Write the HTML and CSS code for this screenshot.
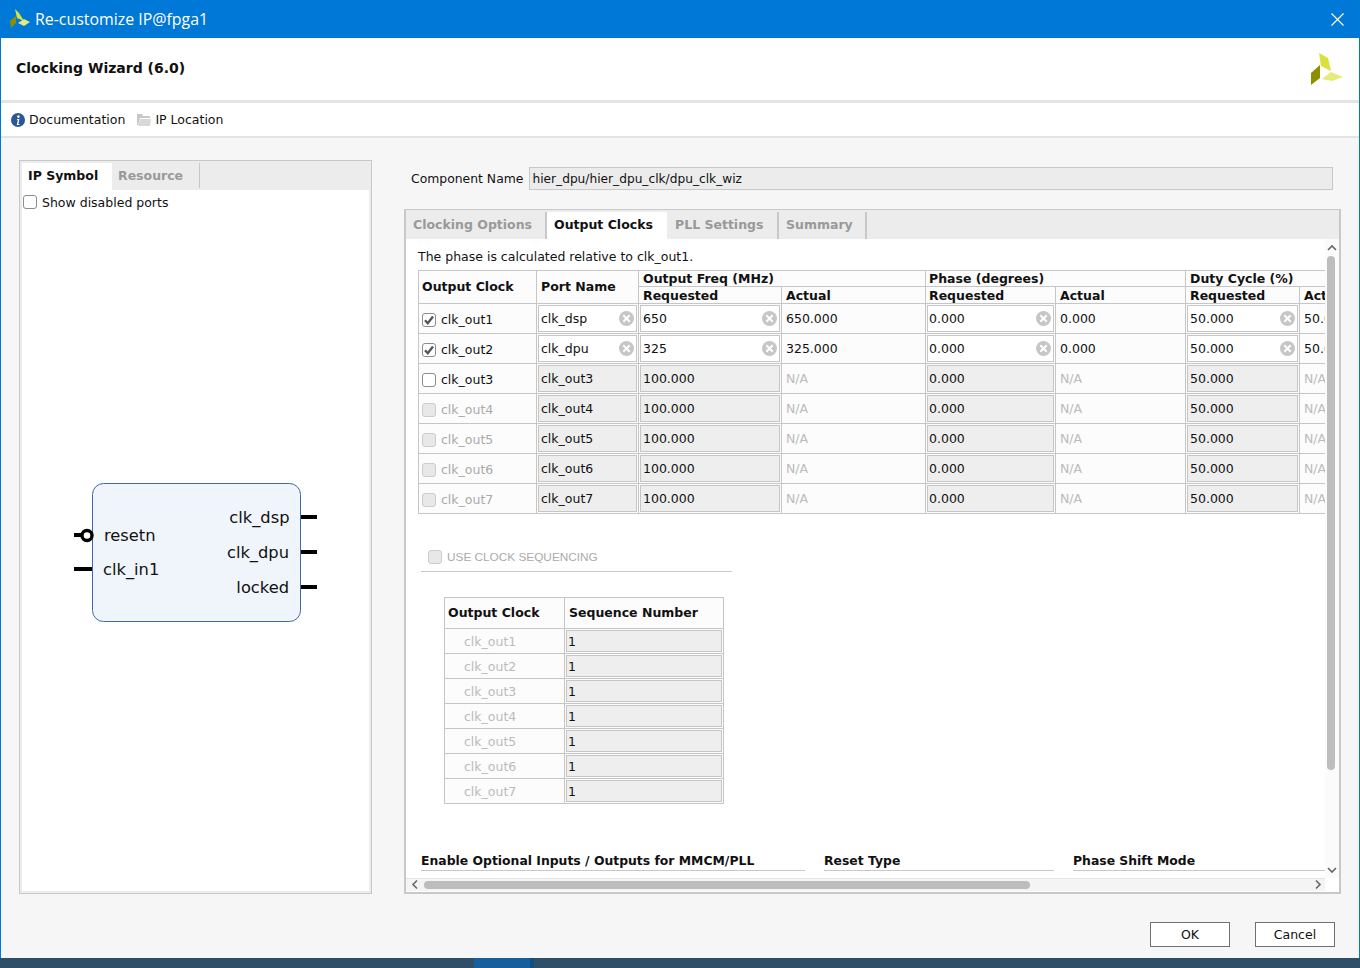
FILE: index.html
```html
<!DOCTYPE html>
<html lang="en">
<head>
<meta charset="utf-8">
<title>Re-customize IP@fpga1</title>
<link rel="stylesheet" href="styles.css">
</head>
<body>
<svg class="defs" width="0" height="0" aria-hidden="true">
  <symbol id="clear" viewBox="0 0 15 15">
    <circle cx="7.5" cy="7.5" r="7.5" fill="#c6c6c6"/>
    <path d="M4.3 4.3l6.4 6.4M10.7 4.3l-6.4 6.4" stroke="#fff" stroke-width="2" fill="none"/>
  </symbol>
  <symbol id="tick" viewBox="0 0 14 14">
    <path d="M3 7.2l2.8 3L11 3.6" stroke="#555" stroke-width="2.4" fill="none"/>
  </symbol>
</svg>
<div class="window">
  <div class="titlebar">
    <svg class="tlogo" width="22" height="20" viewBox="0 0 22 20">
      <polygon points="6,0 10,4 15,12 8,9" fill="#dbe03c"/>
      <polygon points="1,12 7,7 7,14 2,19" fill="#8d8f00"/>
      <polygon points="9,14 15,10 21,13 15,17" fill="#e5ea7c"/>
    </svg>
    <span class="ttext">Re-customize IP@fpga1</span>
    <svg class="tclose" width="13" height="13" viewBox="0 0 13 13"><path d="M.5.5l12 12M12.5.5l-12 12" stroke="#fff" stroke-width="1.1" fill="none"/></svg>
  </div>
  <div class="header">
    <span class="htitle">Clocking Wizard (6.0)</span>
    <svg width="33" height="33" viewBox="0 0 33 33">
      <polygon points="8,0 17,5 20,18 10,13" fill="#dbe03c"/>
      <polygon points="0,20 9,12 9,25 0,32" fill="#8d8f00"/>
      <polygon points="11,26 20,19 32,24 21,28" fill="#e5ea7c"/>
    </svg>
  </div>
  <div class="toolbar">
    <span class="tool">
      <svg width="14" height="14" viewBox="0 0 14 14"><circle cx="7" cy="7" r="7" fill="#2b5797"/><circle cx="7.4" cy="3.6" r="1.3" fill="#fff"/><path d="M6.2 6h2.2l-1 5h1v1H5.8l1-5h-.8z" fill="#fff"/></svg>
      Documentation
    </span>
    <span class="tool">
      <svg width="14" height="13" viewBox="0 0 14 13"><path d="M0 1h5l1 2h7v2H3L1 12H0z" fill="#c8c8c8"/><path d="M3 6h11l-1 7H1z" fill="#d8d8d8"/></svg>
      IP Location
    </span>
  </div>
  <div class="main">
    <section class="leftpanel">
      <div class="tabs">
        <span class="tab active ipsym">IP Symbol</span>
        <span class="tab resource">Resource</span>
      </div>
      <div class="leftbody">
        <label class="showports"><span class="check"></span>Show disabled ports</label>
        <svg class="symbol" width="347" height="676" viewBox="22 214 347 676">
          <rect x="92.5" y="483.5" width="208" height="138" rx="11" fill="#f0f5fb" stroke="#3f6aa8"/>
          <g stroke="#000" stroke-width="4" fill="none">
            <path d="M74 535h9M74 569h18M301 517h16M301 552h16M301 587h16"/>
            <circle cx="87" cy="535.5" r="5" stroke-width="3.4" fill="#fff"/>
          </g>
          <g class="symtext">
            <text x="104" y="541">resetn</text>
            <text x="103" y="575">clk_in1</text>
            <text x="289.5" y="523" text-anchor="end">clk_dsp</text>
            <text x="289" y="558" text-anchor="end">clk_dpu</text>
            <text x="289" y="593" text-anchor="end">locked</text>
          </g>
        </svg>
      </div>
    </section>
    <section class="rightpanel">
      <div class="compname">
        <span>Component Name</span>
        <div class="compfield">hier_dpu/hier_dpu_clk/dpu_clk_wiz</div>
      </div>
      <div class="tabpanel">
        <div class="tabs">
          <span class="tab t1 divided">Clocking Options</span>
          <span class="tab active t2">Output Clocks</span>
          <span class="tab t3 divided">PLL Settings</span>
          <span class="tab t4 divided">Summary</span>
        </div>
        <div class="scrollarea">
          <div class="viewport">
            <p class="phase">The phase is calculated relative to clk_out1.</p>
            <table class="clocks">
              <colgroup><col class="c1"><col class="c2"><col class="c3"><col class="c4"><col class="c5"><col class="c6"><col class="c7"><col class="c8"></colgroup>
              <thead>
                <tr class="h1">
                  <th rowspan="2" class="first">Output Clock</th><th rowspan="2">Port Name</th>
                  <th colspan="2">Output Freq (MHz)</th><th colspan="2" class="first">Phase (degrees)</th><th colspan="2">Duty Cycle (%)</th>
                </tr>
                <tr class="h2"><th>Requested</th><th>Actual</th><th class="first">Requested</th><th>Actual</th><th>Requested</th><th>Actual</th></tr>
              </thead>
              <tbody>
                <tr>
                  <td class="name"><span class="check on"><svg width="14" height="14"><use href="#tick"/></svg></span>clk_out1</td>
                  <td class="f"><div class="field">clk_dsp<svg width="15" height="15"><use href="#clear"/></svg></div></td>
                  <td class="f"><div class="field">650<svg width="15" height="15"><use href="#clear"/></svg></div></td>
                  <td class="val">650.000</td>
                  <td class="f"><div class="field">0.000<svg width="15" height="15"><use href="#clear"/></svg></div></td>
                  <td class="val">0.000</td>
                  <td class="f"><div class="field">50.000<svg width="15" height="15"><use href="#clear"/></svg></div></td>
                  <td class="val">50.000</td>
                </tr>
                <tr>
                  <td class="name"><span class="check on"><svg width="14" height="14"><use href="#tick"/></svg></span>clk_out2</td>
                  <td class="f"><div class="field">clk_dpu<svg width="15" height="15"><use href="#clear"/></svg></div></td>
                  <td class="f"><div class="field">325<svg width="15" height="15"><use href="#clear"/></svg></div></td>
                  <td class="val">325.000</td>
                  <td class="f"><div class="field">0.000<svg width="15" height="15"><use href="#clear"/></svg></div></td>
                  <td class="val">0.000</td>
                  <td class="f"><div class="field">50.000<svg width="15" height="15"><use href="#clear"/></svg></div></td>
                  <td class="val">50.000</td>
                </tr>
                <tr>
                  <td class="name"><span class="check"></span>clk_out3</td>
                  <td class="f"><div class="field off">clk_out3</div></td>
                  <td class="f"><div class="field off">100.000</div></td>
                  <td class="val na">N/A</td>
                  <td class="f"><div class="field off">0.000</div></td>
                  <td class="val na">N/A</td>
                  <td class="f"><div class="field off">50.000</div></td>
                  <td class="val na">N/A</td>
                </tr>
                <tr>
                  <td class="name dim"><span class="check dis"></span>clk_out4</td>
                  <td class="f"><div class="field off">clk_out4</div></td>
                  <td class="f"><div class="field off">100.000</div></td>
                  <td class="val na">N/A</td>
                  <td class="f"><div class="field off">0.000</div></td>
                  <td class="val na">N/A</td>
                  <td class="f"><div class="field off">50.000</div></td>
                  <td class="val na">N/A</td>
                </tr>
                <tr>
                  <td class="name dim"><span class="check dis"></span>clk_out5</td>
                  <td class="f"><div class="field off">clk_out5</div></td>
                  <td class="f"><div class="field off">100.000</div></td>
                  <td class="val na">N/A</td>
                  <td class="f"><div class="field off">0.000</div></td>
                  <td class="val na">N/A</td>
                  <td class="f"><div class="field off">50.000</div></td>
                  <td class="val na">N/A</td>
                </tr>
                <tr>
                  <td class="name dim"><span class="check dis"></span>clk_out6</td>
                  <td class="f"><div class="field off">clk_out6</div></td>
                  <td class="f"><div class="field off">100.000</div></td>
                  <td class="val na">N/A</td>
                  <td class="f"><div class="field off">0.000</div></td>
                  <td class="val na">N/A</td>
                  <td class="f"><div class="field off">50.000</div></td>
                  <td class="val na">N/A</td>
                </tr>
                <tr>
                  <td class="name dim"><span class="check dis"></span>clk_out7</td>
                  <td class="f"><div class="field off">clk_out7</div></td>
                  <td class="f"><div class="field off">100.000</div></td>
                  <td class="val na">N/A</td>
                  <td class="f"><div class="field off">0.000</div></td>
                  <td class="val na">N/A</td>
                  <td class="f"><div class="field off">50.000</div></td>
                  <td class="val na">N/A</td>
                </tr>
              </tbody>
            </table>
            <div class="seqhead"><span class="check dis"></span>USE CLOCK SEQUENCING</div>
            <table class="seq">
              <colgroup><col class="s1"><col class="s2"></colgroup>
              <thead><tr><th class="first">Output Clock</th><th>Sequence Number</th></tr></thead>
              <tbody>
                <tr><td class="sname">clk_out1</td><td class="f"><div class="field off">1</div></td></tr>
                <tr><td class="sname">clk_out2</td><td class="f"><div class="field off">1</div></td></tr>
                <tr><td class="sname">clk_out3</td><td class="f"><div class="field off">1</div></td></tr>
                <tr><td class="sname">clk_out4</td><td class="f"><div class="field off">1</div></td></tr>
                <tr><td class="sname">clk_out5</td><td class="f"><div class="field off">1</div></td></tr>
                <tr><td class="sname">clk_out6</td><td class="f"><div class="field off">1</div></td></tr>
                <tr><td class="sname">clk_out7</td><td class="f"><div class="field off">1</div></td></tr>
              </tbody>
            </table>
            <div class="options">
              <div class="opt o1">Enable Optional Inputs / Outputs for MMCM/PLL</div>
              <div class="opt o2">Reset Type</div>
              <div class="opt o3">Phase Shift Mode</div>
            </div>
          </div>
          <div class="vscroll">
            <svg width="14" height="10" viewBox="0 0 14 10"><path d="M3 7l4-4 4 4" stroke="#666" stroke-width="1.6" fill="none"/></svg>
            <div class="vthumb"></div>
            <svg class="vdown" width="14" height="10" viewBox="0 0 14 10"><path d="M3 3l4 4 4-4" stroke="#666" stroke-width="1.6" fill="none"/></svg>
          </div>
          <div class="hscroll">
            <svg width="10" height="13" viewBox="0 0 10 13"><path d="M7 2.5l-4 4 4 4" stroke="#666" stroke-width="1.6" fill="none"/></svg>
            <div class="hthumb"></div>
            <svg class="hright" width="10" height="13" viewBox="0 0 10 13"><path d="M3 2.5l4 4-4 4" stroke="#666" stroke-width="1.6" fill="none"/></svg>
          </div>
          <div class="corner"></div>
        </div>
      </div>
    </section>
  </div>
  <div class="footer">
    <button class="btn">OK</button>
    <button class="btn">Cancel</button>
  </div>
</div>
<div class="taskbar"><span class="taskitem"></span></div>
</body>
</html>
```

FILE: styles.css
```css
* { box-sizing: border-box; }
html, body { margin: 0; padding: 0; }
body {
  width: 1360px;
  height: 968px;
  overflow: hidden;
  font-family: "DejaVu Sans", sans-serif;
  font-size: 12.5px;
  color: #111;
  display: flex;
  flex-direction: column;
}
.defs { position: absolute; }
.window {
  height: 958px;
  display: flex;
  flex-direction: column;
  background: #f6f6f6;
  border-left: 1px solid #0078d7;
  border-right: 1px solid #0078d7;
}
.titlebar {
  height: 38px;
  flex: none;
  background: #0078d7;
  color: #fff;
  display: flex;
  align-items: center;
  padding: 0 15px 0 8px;
}
.tlogo { margin-right: 4px; }
.ttext { font-family: "Open Sans", sans-serif; font-size: 15.9px; }
.tclose { margin-left: auto; }
.header {
  height: 65px;
  flex: none;
  background: #fff;
  border-bottom: 3px solid #e4e4e4;
  display: flex;
  align-items: center;
  justify-content: space-between;
  padding: 0 15px;
}
.htitle { font-weight: 700; font-size: 14px; margin-top: -2px; }
.toolbar {
  height: 35px;
  flex: none;
  background: #fff;
  border-bottom: 2px solid #e4e4e4;
  display: flex;
  align-items: center;
  gap: 12px;
  padding: 0 10px;
}
.tool { display: flex; align-items: center; gap: 4px; }
.main {
  flex: 1;
  min-height: 0;
  display: flex;
  gap: 32px;
  padding: 22px 18px 0;
}
.leftpanel {
  width: 353px;
  height: 734px;
  border: 1px solid #c8c8c8;
  padding: 2px;
  background: #ececec;
  display: flex;
  flex-direction: column;
}
.tabs {
  height: 27px;
  flex: none;
  display: flex;
  background: #ececec;
}
.tab {
  font-weight: 700;
  color: #999;
  display: flex;
  align-items: center;
  padding-left: 6px;
  padding-bottom: 2px;
}
.tab.active { background: #fff; color: #111; }
.divided { border-right: 2px solid #c8c8c8; }
.ipsym { width: 90px; }
.resource { width: 88px; border-right: 1px solid #c8c8c8; margin-bottom: 2px; padding-bottom: 0; }
.leftbody {
  flex: 1;
  background: #fff;
  min-height: 0;
}
.showports {
  display: flex;
  align-items: center;
  height: 24px;
  padding-left: 1px;
}
.check {
  width: 14px;
  height: 14px;
  border: 1px solid #8c8c8c;
  border-radius: 3px;
  background: #fff;
  display: inline-flex;
  flex: none;
  margin-right: 5px;
}
.check svg { margin: -1px; }
.check.dis { background: #e8e8e8; border-color: #ccc; }
.symbol { display: block; }
.symtext { font-family: "DejaVu Sans", sans-serif; font-size: 16.3px; fill: #111; }
.rightpanel {
  width: 937px;
  height: 734px;
  display: flex;
  flex-direction: column;
}
.compname {
  height: 23px;
  margin: 7px 8px 0 0;
  display: flex;
  align-items: center;
  padding-left: 7px;
  gap: 6px;
  flex: none;
  font-size: 12.4px;
}
.compfield {
  flex: 1;
  height: 23px;
  line-height: 22px;
  background: #ececec;
  border: 1px solid #c8c8c8;
  padding-left: 2px;
  font-size: 12.2px;
}
.tabpanel {
  margin-top: 19px;
  flex: 1;
  min-height: 0;
  border: 1px solid #c8c8c8;
  border-width: 1px 2px 2px 2px;
  display: flex;
  flex-direction: column;
  background: #ececec;
}
.tabpanel .tabs { height: 29px; padding-top: 2px; }
.t1 { width: 141px; padding-left: 7px; }
.t2 { width: 120px; padding-left: 7px; }
.t3 { width: 112px; padding-left: 8px; }
.t4 { width: 88px; padding-left: 7px; }
.scrollarea {
  flex: 1;
  min-height: 0;
  background: #fff;
  display: grid;
  grid-template-columns: 919px 14px;
  grid-template-rows: 639px 13px;
}
.viewport { overflow: hidden; padding-left: 12px; background: #fff; }
.phase { margin: 0; height: 31px; padding: 10px 0 0 0; line-height: 15px; }
table { border-collapse: collapse; table-layout: fixed; background: #fcfcfc; }
th, td { border: 1px solid #c6c6c6; padding: 0; text-align: left; overflow: hidden; white-space: nowrap; }
th { font-weight: 700; padding-left: 4px; }
th.first { padding-left: 3px; }
.clocks { width: 941px; }
.c1 { width: 118px; }
.c2 { width: 102px; }
.c3 { width: 143px; }
.c4 { width: 144px; }
.c5 { width: 130px; }
.c6 { width: 130px; }
.c7 { width: 114px; }
.c8 { width: 60px; }
.h1 th { height: 16px; line-height: 14px; }
.h2 th { height: 17px; line-height: 15px; }
.clocks tbody tr { height: 30px; }
.name { padding: 2px 0 0 3px; }
.name .check { vertical-align: middle; margin: -2px 5px 0 0; }
.name.dim { color: #aaa; }
.f { padding: 1px; }
.val { padding-left: 4px; }
.na { color: #bbb; }
.field {
  height: 27px;
  border: 1px solid #c6c6c6;
  background: #fff;
  display: flex;
  align-items: center;
  justify-content: space-between;
  padding: 0 2px;
}
.field.off { background: #eee; }
.clocks td:nth-child(5) .field { padding-left: 1px; }
.seqhead {
  margin: 33px 0 0 3px;
  width: 311px;
  height: 25px;
  border-bottom: 1px solid #c8c8c8;
  color: #aaa;
  font-family: "Liberation Sans", sans-serif;
  font-size: 11.8px;
  display: flex;
  align-items: flex-start;
  padding: 3px 0 0 7px;
}
.seq { width: 279px; margin: 25px 0 0 26px; }
.s1 { width: 120px; }
.s2 { width: 159px; }
.seq thead tr { height: 31px; }
.seq thead th { padding-bottom: 2px; }
.seq tbody tr { height: 25px; }
.seq .field { height: 22px; padding-left: 1px; }
.sname { padding-left: 19px; color: #bbb; }
.options {
  display: flex;
  margin: 50px 0 0 3px;
  font-weight: 700;
  font-size: 12.4px;
  width: 904px;
}
.opt { border-bottom: 1px solid #c8c8c8; height: 17px; line-height: 14px; }
.o1 { width: 384px; margin-right: 19px; }
.o2 { width: 230px; margin-right: 19px; }
.o3 { flex: 1; }
.vscroll {
  background: #fbfbfb;
  display: flex;
  flex-direction: column;
  align-items: flex-start;
  padding-top: 4px;
}
.vthumb {
  width: 8px;
  height: 514px;
  margin: 3px 0 0 2px;
  background: #bdbdbd;
  border-radius: 4px;
}
.vdown { margin-top: auto; margin-bottom: 3px; }
.hscroll {
  background: #f4f4f4;
  border-top: 1px solid #e4e4e4;
  display: flex;
  align-items: center;
  padding: 0 0 1px 4px;
}
.hthumb {
  width: 606px;
  height: 8px;
  margin-left: 4px;
  background: #bdbdbd;
  border-radius: 4px;
}
.hright { margin-left: auto; margin-right: 2px; }
.corner { background: #fff; }
.footer {
  height: 64px;
  flex: none;
  display: flex;
  justify-content: flex-end;
  align-items: flex-start;
  gap: 25px;
  padding: 28px 24px 0 0;
}
.btn {
  width: 80px;
  height: 25px;
  background: #fff;
  border: 1px solid #707070;
  font: 12.5px "DejaVu Sans", sans-serif;
  color: #111;
  padding: 0;
}
.taskbar {
  height: 10px;
  flex: none;
  background: #2f4f68;
  padding-left: 474px;
}
.taskitem {
  display: block;
  width: 60px;
  height: 10px;
  background: #17609d;
  border-right: 4px solid #0f4f84;
}
```
